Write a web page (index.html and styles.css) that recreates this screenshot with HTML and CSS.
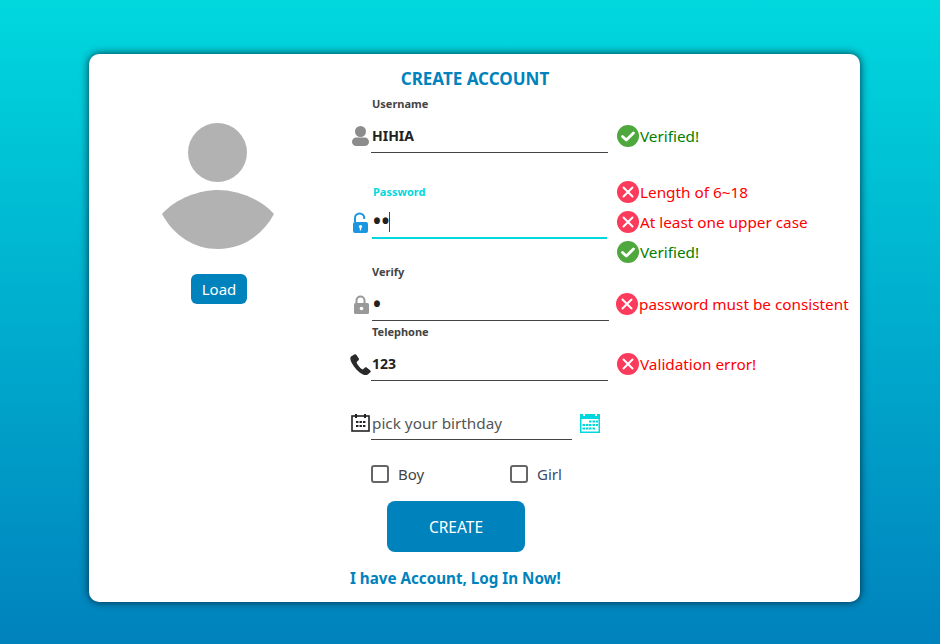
FILE: index.html
```html
<!DOCTYPE html>
<html lang="en">
<head>
  <meta charset="UTF-8" />
  <meta name="viewport" content="width=device-width, initial-scale=1.0"/>
  <title>Create Account</title>
  <link rel="stylesheet" href="styles.css">
</head>
<body>
  <svg class="sprite" aria-hidden="true">
    <symbol id="ok" viewBox="0 0 22 22">
      <circle cx="11" cy="11" r="11" fill="#4fa83d"/>
      <path d="M5.5 11.5l3.8 3.6 7.2-7" fill="none" stroke="#fff" stroke-width="2.8" stroke-linecap="round" stroke-linejoin="round"/>
    </symbol>
    <symbol id="bad" viewBox="0 0 22 22">
      <circle cx="11" cy="11" r="11" fill="#fc3a5c"/>
      <path d="M6.5 6.5l9 9M15.5 6.5l-9 9" fill="none" stroke="#fff" stroke-width="2" stroke-linecap="round"/>
    </symbol>
  </svg>

  <div class="card">
    <div class="photo">
      <svg class="avatar" viewBox="0 0 112 126" width="112" height="126">
        <circle cx="55.5" cy="29.5" r="29.5" fill="#b2b2b2"/>
        <path d="M0 91C14 75 38 67 56 67S98 75 112 91C100 113 80 126 56 126S12 113 0 91Z" fill="#b2b2b2"/>
      </svg>
      <button type="button" class="load">Load</button>
    </div>

    <form class="form">
      <h1>CREATE ACCOUNT</h1>

      <!-- username -->
      <div class="field field-user">
        <div class="main">
          <label for="username">Username</label>
          <div class="row">
            <svg class="icon" viewBox="0 0 21 21" width="21" height="21">
              <circle cx="10.500" cy="5.500" r="5.500" fill="#8c8c8c"/>
              <rect x="2" y="11.500" width="17" height="8.500" rx="4.250" fill="#8c8c8c"/>
            </svg>
            <input type="text" id="username" value="HIHIA">
          </div>
        </div>
        <div class="msgs">
          <div class="msg ok"><svg width="22" height="22"><use href="#ok"/></svg>Verified!</div>
        </div>
      </div>

      <!-- password -->
      <div class="field field-pass">
        <div class="main">
          <label for="password">Password</label>
          <div class="row">
            <svg class="icon" viewBox="0 0 21 21" width="21" height="21">
              <path d="M5 10V6a4.600 4.600 0 0 1 9.200 0v1" fill="none" stroke="#1b96e0" stroke-width="2"/>
              <rect x="3" y="10" width="15" height="11" rx="2" fill="#1b96e0"/>
              <circle cx="10.500" cy="14.600" r="1.600" fill="#fff"/>
              <rect x="9.800" y="15" width="1.400" height="3.400" fill="#fff"/>
            </svg>
            <div class="input-wrap">
              <input type="password" id="password" value="ab">
              <span class="caret"></span>
            </div>
          </div>
        </div>
        <div class="msgs">
          <div class="msg bad"><svg width="22" height="22"><use href="#bad"/></svg>Length of 6~18</div>
          <div class="msg bad"><svg width="22" height="22"><use href="#bad"/></svg>At least one upper case</div>
          <div class="msg ok"><svg width="22" height="22"><use href="#ok"/></svg>Verified!</div>
        </div>
      </div>

      <!-- verify -->
      <div class="field field-verify">
        <div class="main">
          <label for="verify">Verify</label>
          <div class="row">
            <svg class="icon" viewBox="0 0 21 21" width="21" height="21">
              <path d="M6.500 10V6.500a4 4 0 0 1 8 0V10" fill="none" stroke="#999" stroke-width="2"/>
              <rect x="4" y="9" width="15" height="11" rx="1.500" fill="#999"/>
              <circle cx="11.500" cy="14.500" r="1.800" fill="#fff"/>
            </svg>
            <input type="password" id="verify" value="a">
          </div>
        </div>
        <div class="msgs">
          <div class="msg bad"><svg width="22" height="22"><use href="#bad"/></svg>password must be consistent</div>
        </div>
      </div>

      <!-- telephone -->
      <div class="field field-tel">
        <div class="main">
          <label for="tel">Telephone</label>
          <div class="row">
            <svg class="icon" viewBox="0 0 21 21" width="21" height="21">
              <path d="M4.300 0.600L1 2.500C-.2 3.500.3 6 1.800 9c2.200 4.300 6.500 9 10.700 11.200 2.300 1.200 4 1.200 5.300.3l2.600-2.300c.6-.6.5-1.300-.1-1.800l-3.600-2.800c-.6-.4-1.300-.4-1.900.1l-1.500 1.400c-.5.400-1 .4-1.500 0-2-1.500-4-4-5-6.200-.2-.6-.1-1 .3-1.400l1.400-1.200c.5-.5.600-1.100.3-1.700L6.500 1C6 .2 5 .1 4.300.6z" fill="#2a2a2a"/>
            </svg>
            <input type="tel" id="tel" value="123">
          </div>
        </div>
        <div class="msgs">
          <div class="msg bad"><svg width="22" height="22"><use href="#bad"/></svg>Validation error!</div>
        </div>
      </div>

      <!-- birthday -->
      <div class="row birthday">
        <svg class="icon" viewBox="0 0 21 21" width="21" height="21">
          <rect x="2" y="3" width="17" height="15" fill="none" stroke="#222" stroke-width="1.600"/>
          <path d="M6 1v4M15 1v4" stroke="#222" stroke-width="2"/>
          <path d="M6 8h2.400v2H6zM9.500 8h2.400v2H9.500zM13 8h2.400v2H13zM6 12h2.400v2H6zM9.500 12h2.400v2H9.500zM13 12h2.400v2H13z" fill="#222"/>
        </svg>
        <input type="text" class="date" placeholder="pick your birthday">
        <svg class="date-icon" viewBox="0 0 20 20" width="20" height="20">
          <path d="M0 1h3v2h2V1h10v2h2V1h3v19H0z" fill="#00d8de"/>
          <rect x="1.500" y="6" width="17" height="12.500" fill="#fff"/>
          <path d="M9 7.500h2.500v2H9zM12.500 7.500H15v2h-2.500zM16 7.500h2v2h-2zM2.500 11H5v2H2.500zM6 11h2.500v2H6zM9 11h2.500v2H9zM12.500 11H15v2h-2.500zM16 11h2v2h-2zM2.500 14.500H5v2H2.500zM6 14.500h2.500v2H6zM9 14.500h2.500v2H9zM12.500 14.500H15v2h-2.500z" fill="#00d8de"/>
        </svg>
      </div>

      <div class="gender">
        <label class="check boy"><input type="checkbox">Boy</label>
        <label class="check girl"><input type="checkbox">Girl</label>
      </div>

      <button type="submit" class="create">CREATE</button>
      <a href="#" class="login">I have Account, Log In Now!</a>
    </form>
  </div>
</body>
</html>
```

FILE: styles.css
```css
html, body {
  height: 100%;
  margin: 0;
  padding: 0;
  overflow: hidden;
}

body {
  font-family: "Noto Sans", sans-serif;
  background: linear-gradient(#00d8de, #0082bd);
  padding: 54px 0 0 89px;
  box-sizing: border-box;
  color: #444;
}

.sprite {
  display: none;
}

.card {
  display: flex;
  width: 771px;
  height: 548px;
  background: #fff;
  border-radius: 10px;
  box-shadow: 0 0 8px rgba(0, 30, 50, 0.9);
}

.photo {
  display: flex;
  flex-direction: column;
  align-items: center;
  width: 260px;
  padding-top: 69px;
  box-sizing: border-box;
}

.avatar {
  display: block;
  margin-right: 2px;
}

.load {
  margin-top: 25px;
  width: 56px;
  height: 30px;
  padding: 0;
  background: #0082bd;
  color: #fff;
  border: none;
  border-radius: 6px;
  font: 15px "Noto Sans", sans-serif;
}

.form {
  display: flex;
  flex-direction: column;
  align-items: flex-start;
  width: 510px;
  margin-left: 1px;
}

h1 {
  width: 250px;
  height: 24px;
  margin: 13px 0 3px;
  text-align: center;
  color: #0082bd;
  font-size: 17px;
  line-height: 24px;
  font-weight: 700;
}

.field {
  display: flex;
  width: 100%;
  height: 59px;
}

.main {
  width: 267px;
  flex: none;
}

.main label {
  display: block;
  height: 20px;
  padding-left: 22px;
  font-size: 11px;
  line-height: 20px;
  font-weight: 700;
  color: #444;
}

.row {
  display: flex;
  align-items: center;
  height: 34px;
  margin-top: 5px;
}

.icon {
  flex: none;
  display: block;
}

input[type="text"], input[type="password"], input[type="tel"] {
  width: 237px;
  height: 34px;
  padding: 0 0 0 1px;
  box-sizing: border-box;
  border: none;
  border-bottom: 1px solid #444;
  outline: none;
  background: none;
  font: 700 14px "Noto Sans", sans-serif;
  color: #222;
}

input[type="password"] {
  font-size: 21px;
  letter-spacing: 0.5px;
}

.msgs {
  align-self: flex-end;
  padding-bottom: 2px;
}

.msg {
  display: flex;
  align-items: center;
  gap: 1px;
  height: 30px;
  font-size: 15.3px;
  white-space: nowrap;
}

.msg.ok {
  color: #008000;
}

.msg.bad {
  color: #f00;
}

.field-pass {
  height: 57px;
  margin-top: 29px;
}

.field-pass label {
  padding-left: 23px;
  color: #00d8de;
}

.field-pass .row {
  margin-top: 3px;
}

.field-pass .msgs {
  align-self: flex-start;
  margin-top: -5px;
  padding-bottom: 0;
}

.input-wrap {
  position: relative;
  margin-left: 1px;
}

.input-wrap input[type="password"] {
  width: 235px;
  border-bottom: 2px solid #00d8de;
}

.caret {
  position: absolute;
  left: 17px;
  top: 7px;
  width: 1px;
  height: 20px;
  background: #444;
}

.field-verify {
  margin-top: 23px;
  height: 59px;
}

.field-verify label {
  padding-left: 22px;
}

.field-verify .icon {
  margin-right: 1px;
}

.field-verify input[type="password"] {
  width: 237px;
}

.field-verify .msgs {
  margin-left: -1px;
}

.field-tel {
  margin-top: 1px;
}

.birthday {
  margin-top: 25px;
}

.birthday .date {
  width: 201px;
  font-size: 15.3px;
  font-weight: 400;
}

.birthday .date::placeholder {
  color: #555;
  opacity: 1;
}

.date-icon {
  margin: -1px 0 0 8px;
}

.gender {
  display: flex;
  height: 24px;
  margin: 22px 0 0 21px;
}

.check {
  display: flex;
  align-items: center;
  width: 139px;
  font-size: 15px;
  color: #444;
}

.check.girl {
  color: #3b4a6b;
}

.check input {
  appearance: none;
  width: 18px;
  height: 18px;
  margin: 0 9px 0 0;
  border: 2px solid #666;
  border-radius: 3px;
  box-sizing: border-box;
  background: #fff;
}

.create {
  width: 138px;
  height: 51px;
  margin: 15px 0 0 37px;
  background: #0082bd;
  color: #fff;
  border: none;
  border-radius: 8px;
  font: 15.5px "Noto Sans", sans-serif;
}

.login {
  margin-top: 15px;
  height: 22px;
  line-height: 22px;
  font-size: 15.2px;
  font-weight: 700;
  color: #0082bd;
  text-decoration: none;
}
```
